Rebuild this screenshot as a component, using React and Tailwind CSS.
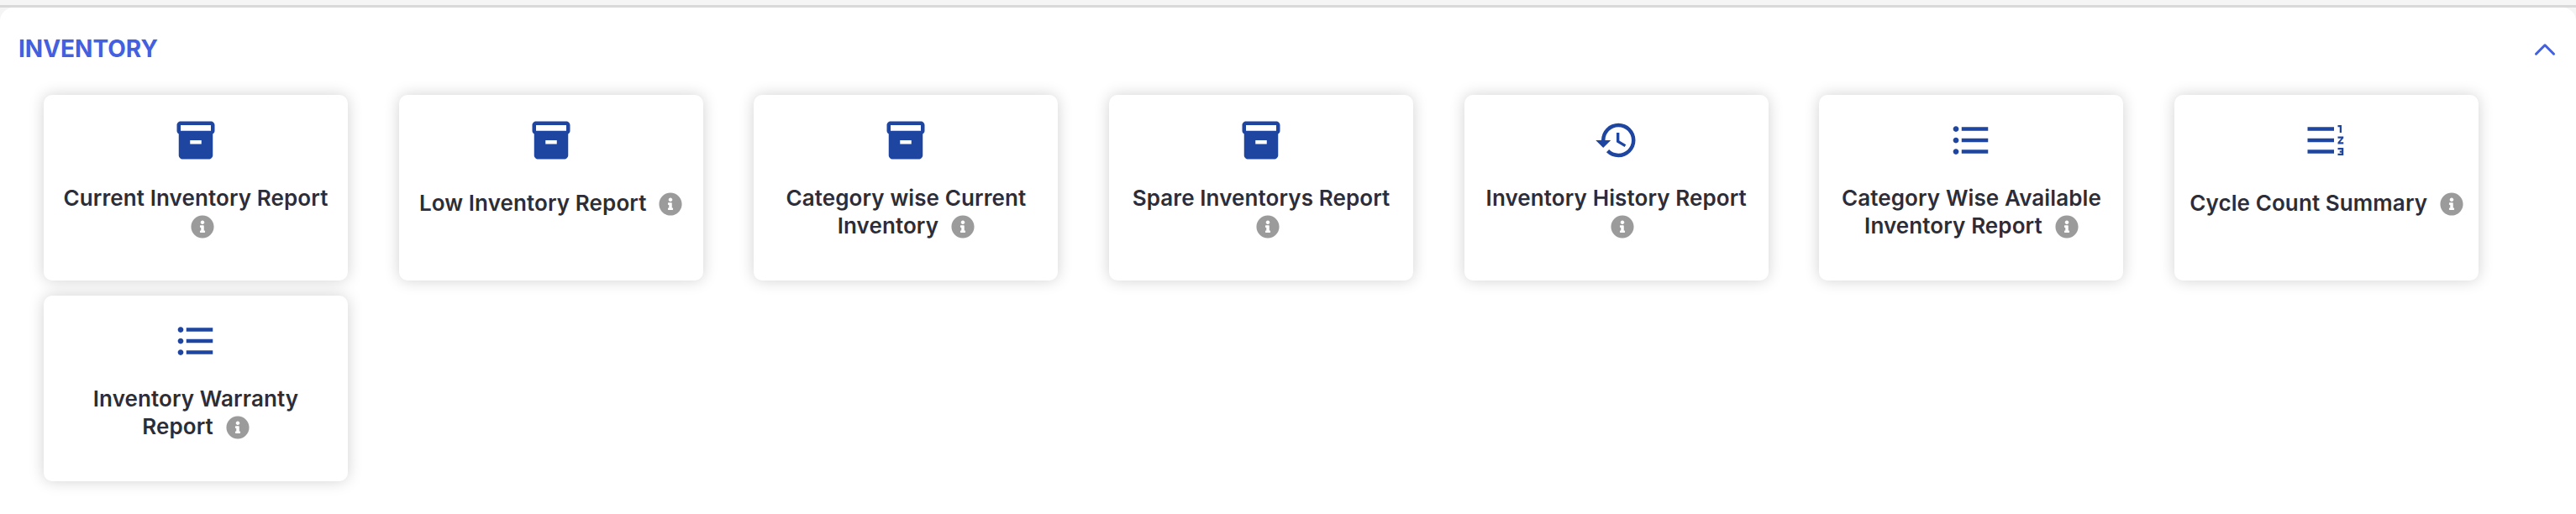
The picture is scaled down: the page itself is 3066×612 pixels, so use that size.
import React from 'react';
import { FaInfoCircle } from 'react-icons/fa';
import { ChevronUp } from 'lucide-react';
import {
  MdInventory2,
  MdHistory,
  MdFormatListBulleted,
  MdFormatListNumberedRtl,
} from 'react-icons/md';

const reports = [
  { title: 'Current Inventory Report', icon: MdInventory2 },
  { title: 'Low Inventory Report', icon: MdInventory2, single: true },
  { title: 'Category wise Current Inventory', icon: MdInventory2 },
  { title: 'Spare Inventorys Report', icon: MdInventory2 },
  { title: 'Inventory History Report', icon: MdHistory },
  { title: 'Category Wise Available Inventory Report', icon: MdFormatListBulleted },
  { title: 'Cycle Count Summary', icon: MdFormatListNumberedRtl, single: true },
  { title: 'Inventory Warranty\nReport', icon: MdFormatListBulleted },
];

const ReportCard = ({ title, icon: Icon, single }) => (
  <div className="w-[362px] h-[221px] rounded-[10px] bg-white shadow-[0_0_18px_rgba(0,0,0,0.18)] px-[14px] pt-[27px] flex flex-col items-center">
    <Icon size={54} color="#1e45a0" className="shrink-0" />
    <p className={`whitespace-pre-line text-center text-[26px] leading-[33px] font-semibold tracking-[0.1px] text-[#2d2d38] ${single ? 'mt-[31px]' : 'mt-[25px]'}`}>
      {title}
      <FaInfoCircle size={28} color="#9b9b9b" className="inline-block align-[-6px] ml-[15px]" />
    </p>
  </div>
);

const App = () => (
  <div className="w-[3066px] h-[612px] bg-[#f5f5f5] overflow-hidden font-['Inter',sans-serif]">
    <div className="h-[9px] border-b-[3px] border-[#d9d9d9]" />
    <div className="h-[603px] bg-white rounded-t-[16px]">
      <div className="flex items-center justify-between pl-[22px] pr-[16px] pt-[24px] h-[73px]">
        <h2 className="text-[28px] leading-[40px] font-bold text-[#4360df]">INVENTORY</h2>
        <ChevronUp size={42} color="#4360df" strokeWidth={1.75} className="mt-[2px]" />
      </div>
      <div className="flex flex-wrap gap-x-[60.7px] gap-y-[18px] pl-[52px] pt-[31px]">
        {reports.map((report) => (
          <ReportCard key={report.title} {...report} />
        ))}
      </div>
    </div>
  </div>
);

export default App;
